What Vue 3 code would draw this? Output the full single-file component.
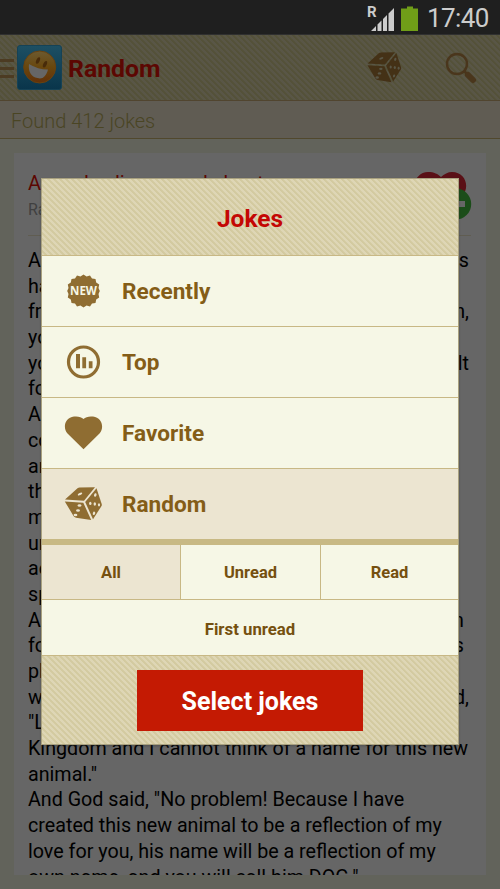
<script setup>
const icons = ['new', 'top', 'heart', 'dice']
const items = ['Recently', 'Top', 'Favorite', 'Random']
const lines = [
  ['Adam and Eve said, "Lord, when we', 'was'],
  ['have walked in the garden'],
  ['from the beginning', 'man,'],
  ['you walked with us'],
  ['you every day', 'difficult'],
  ['for us to remember'],
  ['And God said,'],
  ['companion for you'],
  ['and who will be'],
  ['the reflection'],
  ['my love'],
  ['unconditionally'],
  ['aeons'],
  ['spite of yourselves'],
  ['And God created a', 'an'],
  ['for Adam and Eve', 'was'],
  ['pleased'],
  ['with Adam', 'said,'],
  ['"Lord, all the animals'],
  ['Kingdom and I cannot think of a name for this new'],
  ['animal."'],
  ['And God said, "No problem! Because I have'],
  ['created this new animal to be a reflection of my'],
  ['love for you, his name will be a reflection of my'],
  ['own name, and you will call him DOG."'],
]
</script>

<template>
  <svg class="defs" aria-hidden="true">
    <symbol id="dice" viewBox="0 0 38 34">
      <path d="M13 1.2Q14 .5 15 .5L30.5.3 19.5 13.8.5 12.5Z" />
      <path d="M.3 14.4 18.8 15.7 26.7 33.1 11.5 30.7Q9.8 30.4 9 29Z" />
      <path d="M32 1.2 37.2 17Q37.5 18 37 19L28.5 32.3 20.7 15Z" />
      <g class="pip">
        <ellipse cx="15.5" cy="7" rx="2.4" ry="1.1" transform="rotate(-22 15.5 7)" />
        <ellipse cx="15" cy="18.5" rx="1.9" ry="1.3" />
        <ellipse cx="13.5" cy="23.5" rx="1.9" ry="1.3" />
        <ellipse cx="11" cy="28" rx="1.9" ry="1.3" />
        <ellipse cx="30.8" cy="8" rx="1.2" ry="1.8" transform="rotate(20 30.8 8)" />
        <ellipse cx="25.8" cy="16.4" rx="1.2" ry="1.7" />
        <ellipse cx="30.3" cy="17" rx="1.2" ry="1.7" />
        <ellipse cx="34.5" cy="17.8" rx="1.1" ry="1.6" />
        <ellipse cx="29.5" cy="26.3" rx="1.2" ry="1.7" transform="rotate(20 29.5 26.3)" />
      </g>
    </symbol>
    <symbol id="heart" viewBox="0 0 38 34">
      <path d="M19 33.2 3 17.500C-2 12 .2 1.500 9.500.500 13.500.1 17 .8 19 3 21 .8 24.500.1 28.500.500 37.800 1.500 40 12 35 17.500Z" />
    </symbol>
    <symbol id="top" viewBox="0 0 38 34">
      <circle cx="19" cy="17" r="15" fill="none" stroke="#8f6d32" stroke-width="3.2" />
      <path d="M11.5 9h4v14.3h-4zM17.8 12.2h3.8v11.1h-3.8zM24.3 16.2h3.7v7.1h-3.7z" />
    </symbol>
    <symbol id="new" viewBox="0 0 38 34">
      <path d="M19 .5l3 2 3.5-1 2 3 3.5.5.7 3.5 3 2-.7 3.4 1.3 3.1-1.3 3 .7 3.5-3 2-.7 3.5-3.5.5-2 3-3.5-1-3 2-3-2-3.5 1-2-3-3.5-.5-.7-3.5-3-2 .7-3.5-1.3-3 1.3-3.1-.7-3.4 3-2 .7-3.5 3.5-.5 2-3 3.5 1Z" />
      <text x="19" y="21" text-anchor="middle">NEW</text>
    </symbol>
  </svg>
  <div class="screen">
    <div class="status">
      <svg class="signal" viewBox="0 0 30 30">
        <text x="0" y="12.500">R</text>
        <path d="M4 27 9 22v5zM10.500 20.500l4-4V27h-4zM16 15l4-4v16h-4zM21.500 9.500 27 4v23h-5.500z" fill="#ccc" />
      </svg>
      <svg class="battery" viewBox="0 0 18 26"><path d="M6 .5h6v2h5V25H0V2.5h6z" fill="#709e18" /></svg>
      <span>17:40</span>
    </div>
    <header class="bar">
      <div class="menu"><i /><i /><i /></div>
      <svg class="logo" viewBox="0 0 45 45">
        <defs>
          <linearGradient id="blue" x2="0" y2="1"><stop stop-color="#1d4f63" /><stop offset="1" stop-color="#09354b" /></linearGradient>
          <linearGradient id="orange" x2="0" y2="1"><stop stop-color="#6c5a30" /><stop offset=".5" stop-color="#69470d" /><stop offset="1" stop-color="#633009" /></linearGradient>
        </defs>
        <rect x=".5" y=".5" width="44" height="44" rx="2.5" fill="url(#blue)" stroke="#154256" />
        <circle cx="22.7" cy="22" r="16" fill="url(#orange)" stroke="#69420f" />
        <path d="M12 19Q21 24.500 31 24.500C29 32 25 34.500 20.500 33 14 32 11 26 12 19Z" fill="#666" />
        <ellipse cx="21" cy="15.500" rx="1.700" ry="3.500" transform="rotate(24 21 15.500)" fill="#482b0a" />
        <ellipse cx="28" cy="19.300" rx="1.700" ry="3.500" transform="rotate(24 28 19.300)" fill="#482b0a" />
      </svg>
      <h1>Random</h1>
      <svg class="dice"><use href="#dice" /></svg>
      <svg class="search" viewBox="0 0 32 32">
        <circle cx="12" cy="12" r="10" fill="none" stroke="#4a361c" stroke-width="2.400" />
        <path d="M19 19l4 4" stroke="#4a361c" stroke-width="2.500" />
        <path d="M23 23l5 5" stroke="#4a361c" stroke-width="6" stroke-linecap="round" />
      </svg>
    </header>
    <div class="found">Found 412 jokes</div>
    <main class="page">
      <article>
        <h2>A seed saline or and about</h2>
        <div class="tag">Random</div>
        <div class="rule" />
        <p v-for="(l, i) in lines" :key="i"><span v-for="s in l" :key="s">{{ s }}</span></p>
        <svg class="fav" viewBox="0 0 60 56">
          <path d="M29 45 7 24C-2 14 5 1 16 1c6 0 10 2 13 5 3-3 7-5 11-5 13 0 18 14 11 23Z" fill="#5a1016" />
          <circle cx="43.500" cy="33" r="15.700" fill="#1b4d19" /><path d="M36 30h17v6H36z" fill="#666" />
        </svg>
      </article>
    </main>
    <section class="dialog">
      <div class="head stripe">Jokes</div>
      <div v-for="(name, i) in items" :key="name" class="item" :class="{ on: i === 3 }">
        <svg class="icon"><use :href="'#' + icons[i]" /></svg><span>{{ name }}</span>
      </div>
      <div class="tabs"><div class="on">All</div><div>Unread</div><div>Read</div></div>
      <div class="first">First unread</div>
      <div class="foot stripe"><button>Select jokes</button></div>
    </section>
  </div>
</template>

<style>
body { margin: 0; overflow: hidden; }
</style>
<style scoped>
* { box-sizing: border-box; }
.defs { position: absolute; width: 0; height: 0; }
.screen { position: relative; display: flex; flex-direction: column; width: 500px; height: 889px; overflow: hidden; background: #62635b; font-family: Roboto, sans-serif; }
.status { display: flex; height: 35px; flex: none; background: #1f1f1f; border-bottom: 1px solid #303030; color: #ccc; font-size: 26px; line-height: 36px; }
.signal { width: 30px; height: 30px; margin: 4px 0 0 367px; overflow: visible; }
.signal text { font: bold 15px Roboto, sans-serif; fill: #ccc; }
.battery { width: 18px; height: 26px; margin: 6px 0 0 4px; }
.status span { margin-left: 8px; white-space: nowrap; letter-spacing: -0.6px; }
.stripe { background: repeating-linear-gradient(45deg, #ded6b5 0 1.700px, #d3caa0 2.200px 3.500px, #ded6b5 4.240px); }
.bar { display: flex; align-items: center; height: 66px; flex: none; border-bottom: 1px solid #51452f; background: repeating-linear-gradient(45deg, #595646 0 1.700px, #545139 2.200px 3.500px, #595646 4.240px); }
.menu { display: flex; flex-direction: column; gap: 5px; width: 14px; margin-top: 2px; }
.menu i { height: 3px; background: #4c3b22; }
.logo { width: 45px; height: 45px; margin-left: 3px; }
h1 { margin: 2px 0 0 6px; color: #5c0702; font-size: 24.800px; font-weight: 700; line-height: 30px; width: 299px; }
.dice { width: 35px; height: 31px; fill: #443116; --pip: #595646; }
.search { width: 32px; height: 32px; margin-left: 43px; }
.pip { fill: var(--pip); }
.found { height: 38px; flex: none; padding: 2px 0 0 11px; background: #605c53; border-bottom: 1px solid #51482d; color: #4a4524; font-size: 20px; font-weight: 300; line-height: 37px; }
.page { height: 736px; padding: 14px; }
article { position: relative; height: 722px; padding: 17px 15px 0 14px; overflow: hidden; background: #666; color: #000; }
h2 { margin: 0; font-size: 20px; font-weight: 400; line-height: 26px; color: #5c0702; }
.tag { font-size: 16px; line-height: 28px; color: #404040; }
.rule { height: 1px; margin: 11px 0 12px; background: #605d52; }
p { display: flex; justify-content: space-between; height: 25.700px; margin: 0; padding-right: 2px; font-size: 19.700px; line-height: 25.700px; white-space: nowrap; }
p:nth-of-type(15), p:nth-of-type(16) { padding-right: 7px; }
.fav { position: absolute; left: 398px; top: 18px; width: 60px; height: 56px; }
.dialog { position: absolute; left: 41px; top: 178px; width: 418px; height: 567px; border: 1px solid #a9a17f; background: #f6f7e6; box-shadow: 0 1px 2px #3336; }
.head { height: 77px; border-bottom: 1px solid #c8b885; text-align: center; color: #c40704; font-size: 24.500px; font-weight: 700; line-height: 79px; }
.item { display: flex; align-items: center; height: 71px; padding-left: 22px; border-bottom: 1px solid #c8b885; color: #845d17; font-size: 22.600px; font-weight: 700; }
.item span { padding-top: 1px; }
.item.on { height: 76px; border-bottom: 6px solid #c8b984; }
.on { background: #ece5d1; --pip: #ece5d1; }
.icon { width: 39px; height: 34px; margin-right: 19px; fill: #8f6d32; }
#new text { font: bold 11.500px "Open Sans", sans-serif; fill: #f6f7e6; }
.tabs { display: grid; grid-template: 54px / 139px 140px 1fr; height: 55px; border-bottom: 1px solid #c8b885; }
.tabs div { border-right: 1px solid #c8b885; }
.tabs div:last-child { border: 0; }
.tabs, .first { text-align: center; font-size: 16.500px; font-weight: 700; line-height: 56px; color: #75500f; }
.first { height: 56px; line-height: 59px; font-size: 16.800px; border-bottom: 1px solid #c8b885; }
.foot { display: flex; justify-content: center; height: 88px; padding-top: 14px; }
button { width: 226px; height: 61px; padding: 2px 0 0; border: 0; background: #c41a03; color: #fff; font: 700 25px Roboto, sans-serif; }
</style>
